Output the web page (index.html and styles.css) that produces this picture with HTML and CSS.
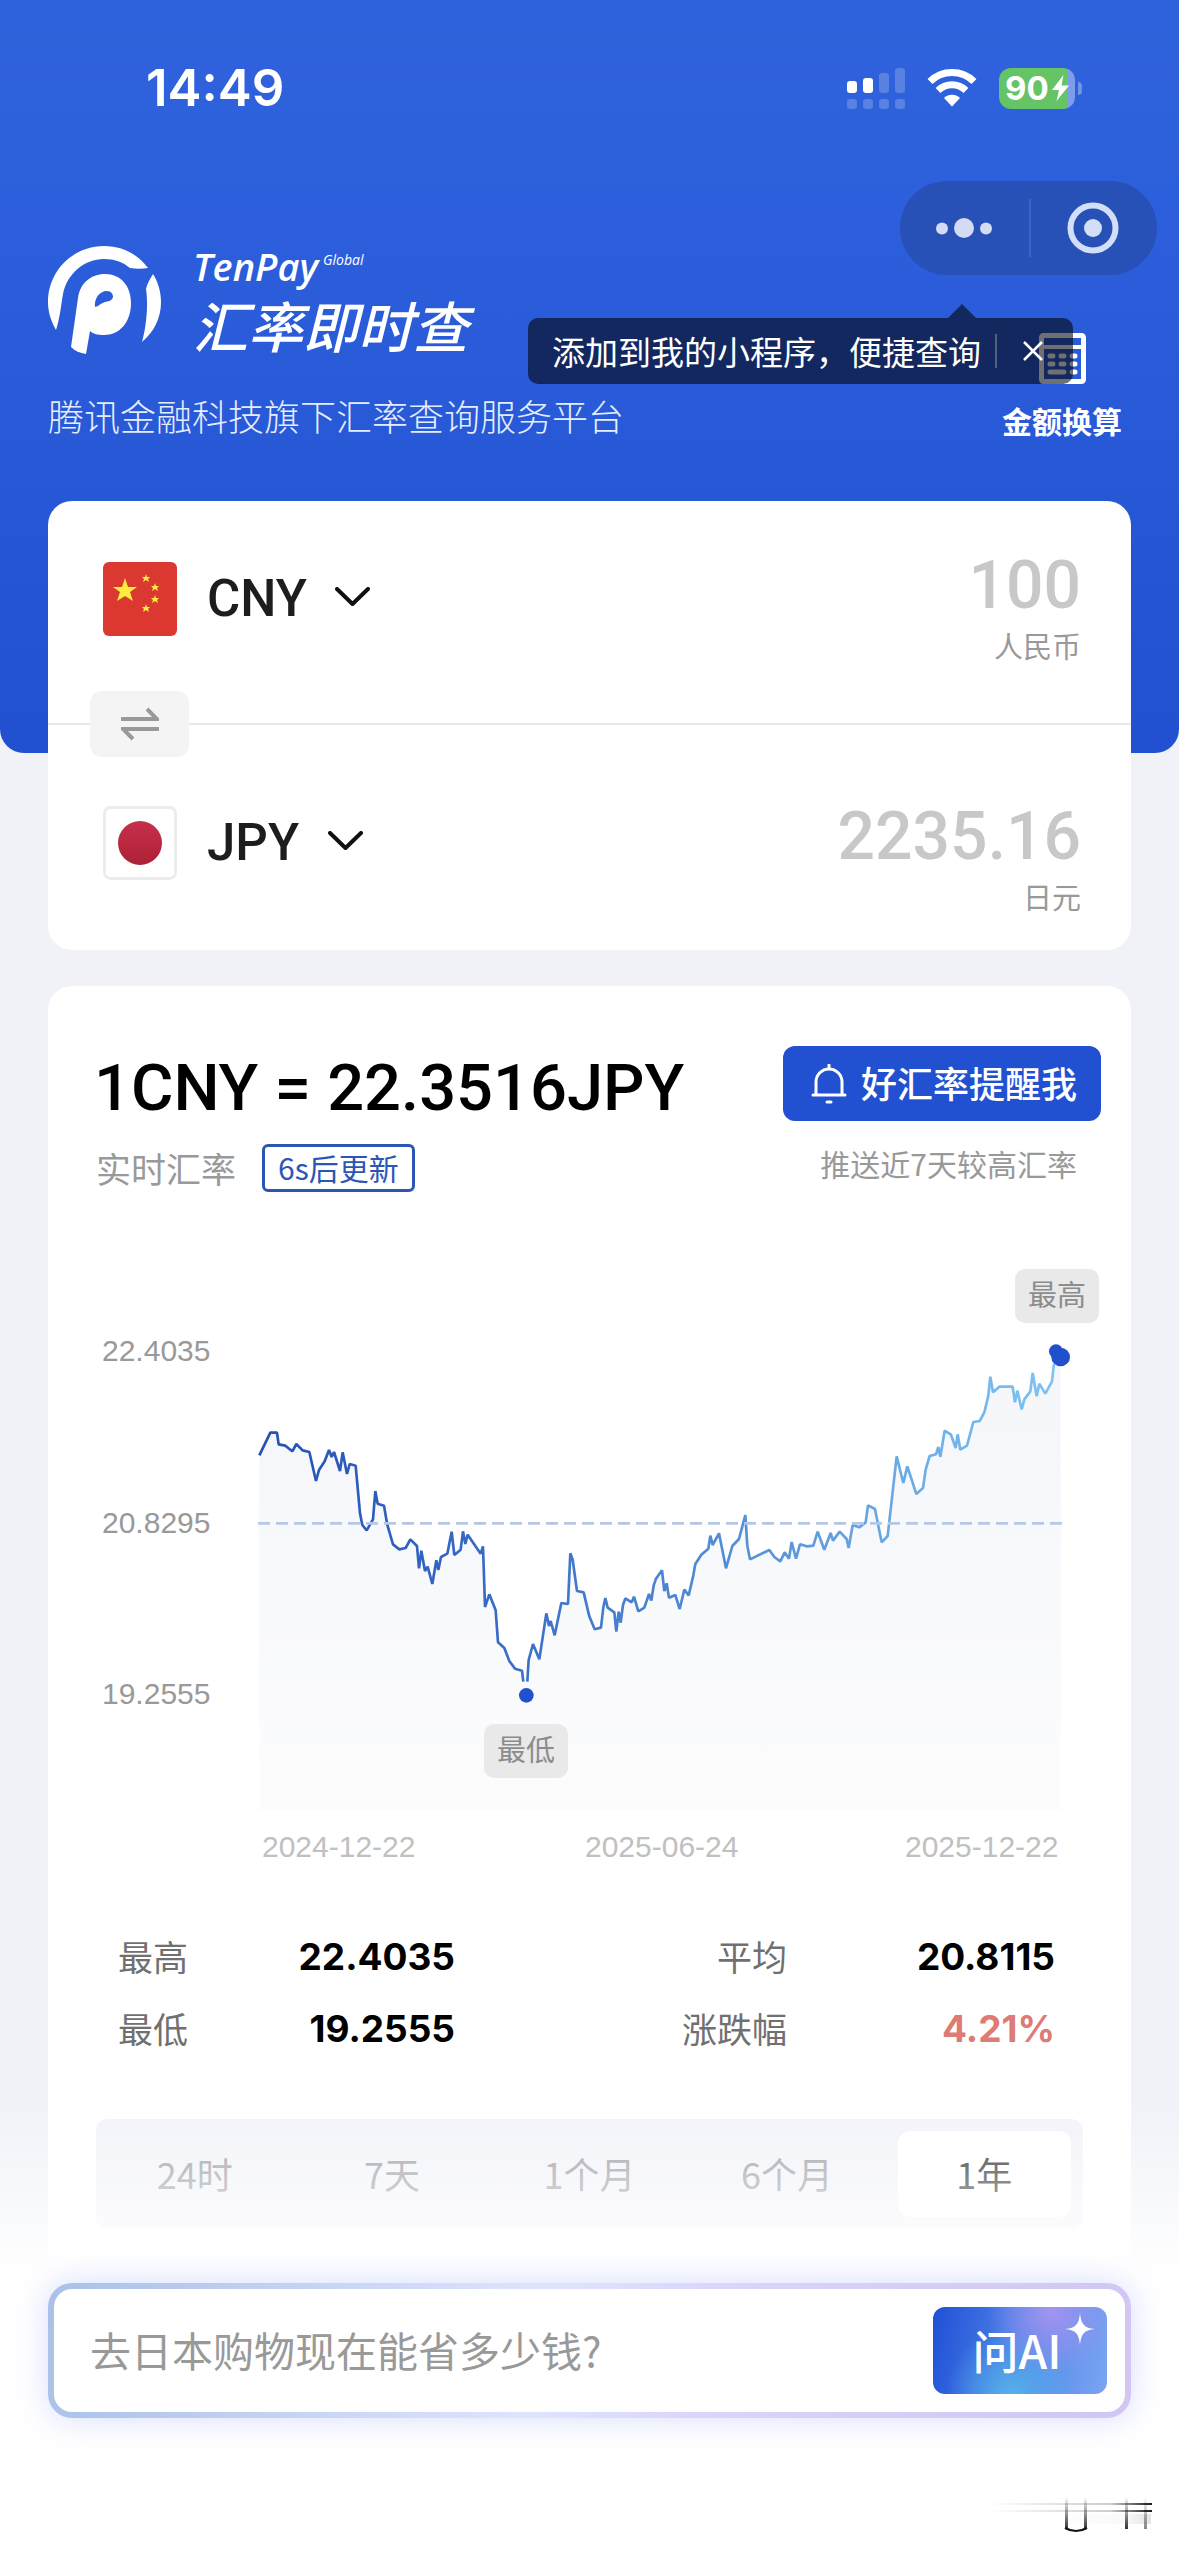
FILE: index.html
```html
<!DOCTYPE html>
<html lang="zh-CN">
<head>
<meta charset="utf-8">
<meta name="viewport" content="width=device-width, initial-scale=1">
<title>汇率即时查</title>
<link rel="stylesheet" href="styles.css">
</head>
<body>
<div class="page">
  <header class="hero">
    <div class="status">
      <time class="status-time">14:49</time>
      <div class="status-icons">
        <svg width="58" height="41" viewBox="0 0 58 41" fill="#fff" aria-hidden="true">
          <rect x="0" y="13" width="10" height="12" rx="3"/>
          <rect x="16" y="10" width="10" height="15" rx="3"/>
          <g opacity=".2">
            <rect x="32" y="5" width="10" height="20" rx="3"/>
            <rect x="48" y="0" width="10" height="25" rx="3"/>
            <rect x="0" y="31" width="10" height="10" rx="3"/>
            <rect x="16" y="31" width="10" height="10" rx="3"/>
            <rect x="32" y="31" width="10" height="10" rx="3"/>
            <rect x="48" y="31" width="10" height="10" rx="3"/>
          </g>
        </svg>
        <svg width="50" height="38" viewBox="0 0 50 38" aria-hidden="true">
          <path d="M3 12.500a31.500 31.500 0 0 1 44 0" fill="none" stroke="#fff" stroke-width="7"/>
          <path d="M11 21.500a20 20 0 0 1 28 0" fill="none" stroke="#fff" stroke-width="7"/>
          <path d="M25 37.500l-8-8.500a11.500 11.500 0 0 1 16 0z" fill="#fff"/>
        </svg>
        <div class="battery">
          <span>90</span>
          <svg width="17" height="26" viewBox="0 0 17 26" aria-hidden="true"><path d="M11.500 0L0 15h7L4.500 26 17 10.500H9.500z" fill="#fff"/></svg>
        </div>
      </div>
    </div>
    <div class="hero-main">
      <div class="brand">
        <div class="brand-row">
          <svg width="113" height="108" viewBox="0 0 113 108" fill="#fff" aria-hidden="true">
            <path d="M8 84C3 75 0 66 0 56 0 25 25 0 56 0c18 0 34 8 44 22-6 1-12 1-18 0C75 16 66 13 56 13 36 13 19 28 15 48 13 59 12 72 8 84z"/>
            <path d="M105 28c5 8 8 18 8 28 0 16-7 30-19 40 1-4 2-8 3-14 2-12 3-26 1-39 1-5 4-10 7-15z"/>
            <path fill-rule="evenodd" d="M23 101L30 52C32 37 43 28 57 28c16 0 26 12 26 29 0 19-11 32-27 32-6 0-11-1-14-4l-4 23c-6-1-11-3-15-7zM47 61c-1-8 4-16 12-16 4 0 6 3 6 6-1 6-9 3-15 9z"/>
          </svg>
          <div class="brand-text">
            <p class="brand-en">TenPay<sup>Global</sup></p>
            <h1 class="brand-cn">汇率即时查</h1>
          </div>
        </div>
        <p class="brand-sub">腾讯金融科技旗下汇率查询服务平台</p>
      </div>
      <a class="calc" href="#calc">
        <svg width="47" height="51" viewBox="0 0 47 51" fill="none" stroke="#fff" aria-hidden="true">
          <rect x="2.500" y="2.500" width="42" height="46" rx="2" stroke-width="5"/>
          <path d="M4 14h39" stroke-width="4"/>
          <path d="M11 23h3M22 23h3M33 23h3M11 31h3M22 31h3M33 31h3M11 39h14M33 39h3" stroke-width="5" stroke-linecap="round"/>
        </svg>
        <span>金额换算</span>
      </a>
    </div>
    <div class="capsule">
      <button type="button" aria-label="更多">
        <svg width="58" height="24" viewBox="0 0 58 24" fill="#d3dcf3" aria-hidden="true"><circle cx="7" cy="12.500" r="6"/><circle cx="29" cy="12" r="10"/><circle cx="51" cy="12.500" r="6"/></svg>
      </button>
      <button type="button" aria-label="关闭">
        <svg width="52" height="52" viewBox="0 0 52 52" aria-hidden="true"><circle cx="26" cy="26" r="22.500" fill="none" stroke="#d3dff8" stroke-width="6"/><circle cx="26" cy="26" r="9" fill="#d3dff8"/></svg>
      </button>
    </div>
    <div class="tip">
      <span>添加到我的小程序，便捷查询</span>
      <button type="button" aria-label="关闭提示">
        <svg width="20" height="20" viewBox="0 0 20 20" aria-hidden="true"><path d="M1 1l18 18M19 1L1 19" stroke="#fff" stroke-width="2.500"/></svg>
      </button>
    </div>
  </header>

  <main>
    <section class="card convert">
      <div class="cur cur-from">
        <div class="pick">
          <svg width="74" height="74" viewBox="0 0 74 74" aria-hidden="true">
            <rect width="74" height="74" rx="6" fill="#db3832"/>
            <g fill="#fbee3f">
              <path d="M22 16l3 9h9l-7 5 3 9-8-5-8 5 3-9-7-5h9z"/>
              <path d="M43 12l1 3h3l-2 2 1 3-3-2-3 2 1-3-2-2h3zM52 21l1 3h3l-2 2 1 3-3-2-3 2 1-3-2-2h3zM52 33l1 3h3l-2 2 1 3-3-2-3 2 1-3-2-2h3zM43 42l1 3h3l-2 2 1 3-3-2-3 2 1-3-2-2h3z"/>
            </g>
          </svg>
          <select aria-label="持有币种"><option>CNY</option></select>
          <svg class="chev" width="35" height="20" viewBox="0 0 35 20" aria-hidden="true"><path d="M2 2l15.500 15L33 2" fill="none" stroke="#111" stroke-width="4" stroke-linecap="round" stroke-linejoin="round"/></svg>
        </div>
        <div class="amount">
          <input id="from" type="text" inputmode="decimal" value="100">
          <label for="from">人民币</label>
        </div>
      </div>
      <div class="split">
        <button type="button" class="swap" aria-label="交换币种">
          <svg width="38" height="34" viewBox="0 0 38 34" fill="none" stroke="#999" stroke-width="4" aria-hidden="true"><path d="M0 12h36L26 2M38 22H2l10 10"/></svg>
        </button>
      </div>
      <div class="cur cur-to">
        <div class="pick">
          <svg width="74" height="74" viewBox="0 0 74 74" aria-hidden="true">
            <defs><linearGradient id="sun" x2="0" y2="1"><stop stop-color="#c5304a"/><stop offset="1" stop-color="#ae2135"/></linearGradient></defs>
            <rect x="1.500" y="1.500" width="71" height="71" rx="6" fill="#fff" stroke="#ececec" stroke-width="3"/>
            <circle cx="37" cy="37" r="22" fill="url(#sun)"/>
          </svg>
          <select aria-label="目标币种"><option>JPY</option></select>
          <svg class="chev" width="35" height="20" viewBox="0 0 35 20" aria-hidden="true"><path d="M2 2l15.500 15L33 2" fill="none" stroke="#111" stroke-width="4" stroke-linecap="round" stroke-linejoin="round"/></svg>
        </div>
        <div class="amount">
          <input id="to" type="text" inputmode="decimal" value="2235.16">
          <label for="to">日元</label>
        </div>
      </div>
    </section>

    <section class="card rate">
      <div class="rate-head">
        <div class="rate-now">
          <h2>1CNY = 22.3516JPY</h2>
          <p class="live">实时汇率 <span class="refresh">6s后更新</span></p>
        </div>
        <div class="alert">
          <button type="button" class="alert-btn">
            <svg width="36" height="40" viewBox="0 0 36 40" fill="none" stroke="#fff" stroke-width="3" stroke-linecap="round" aria-hidden="true"><path d="M18 1v4M5 30V18a13 13 0 0 1 26 0v12M2 31h32M16 38h4"/></svg>
            <span>好汇率提醒我</span>
          </button>
          <p>推送近7天较高汇率</p>
        </div>
      </div>

      <svg class="chart" viewBox="0 0 1003 610" role="img" aria-label="近一年汇率走势">
        <defs>
          <linearGradient id="line" gradientUnits="userSpaceOnUse" x1="178" x2="2582" y1="0" y2="0">
            <stop stop-color="#2351b4"/><stop offset=".3" stop-color="#3a6cc6"/><stop offset=".6" stop-color="#5590d6"/><stop offset="1" stop-color="#80c4f2"/>
          </linearGradient>
          <linearGradient id="area" x2="0" y2="1"><stop stop-color="#f4f6fa"/><stop offset="1" stop-color="#fcfcfd"/></linearGradient>
        </defs>
        <g transform="translate(102 40) scale(.33333)">
          <path fill="url(#area)" d="M178 1530V466L211 398 231 398 236 433 256 437 277 454 289 432 308 451 328 456 348 543 357 510 374 484 387 450 395 471 402 456 420 513 428 457 441 522 449 492 467 497 480 640 487 675 500 691 519 658 526 573 533 611 552 617 562 675 579 733 598 748 617 744 631 718 651 738 657 805 664 752 675 813 683 800 697 852 709 781 715 810 723 771 742 761 755 695 763 765 782 749 789 694 796 732 803 704 842 761 849 739 855 921 868 883 887 931 894 1027 913 1044 928 1083 945 1106 966 1112 970 1145 982 1145 986 1080 999 1032 1018 1078 1039 940 1047 978 1052 963 1064 1006 1084 909 1104 912 1111 760 1118 779 1131 873 1151 877 1168 949 1184 988 1203 983 1210 922 1216 894 1223 923 1243 937 1249 995 1256 935 1262 968 1269 915 1276 895 1295 907 1302 890 1315 934 1333 923 1347 882 1354 902 1361 857 1368 836 1386 811 1393 873 1400 850 1407 893 1426 885 1439 927 1453 869 1466 886 1480 826 1486 792 1504 764 1525 746 1531 707 1538 735 1557 700 1578 805 1597 738 1617 717 1636 645 1642 737 1650 778 1708 750 1723 771 1741 784 1754 757 1767 776 1775 726 1788 776 1800 733 1820 739 1840 737 1853 695 1873 749 1892 699 1899 722 1919 695 1940 717 1946 744 1958 675 1978 682 1997 667 2004 616 2025 627 2045 727 2063 708 2090 469 2110 549 2122 499 2135 539 2149 582 2169 564 2177 509 2189 468 2208 463 2215 441 2221 470 2234 392 2253 404 2267 444 2273 403 2281 449 2301 437 2320 366 2339 363 2353 337 2365 287 2371 230 2379 277 2398 260 2438 260 2445 307 2452 272 2465 328 2473 298 2491 274 2498 219 2510 289 2518 251 2536 281 2556 244 2562 191 2582 165V1530z"/>
          <g fill="none" stroke="url(#line)" stroke-width="8" stroke-linejoin="bevel">
            <polyline points="178,466 211,398 231,398 236,433 256,437 277,454 289,432 308,451 328,456 348,543 357,510 374,484 387,450 395,471 402,456 420,513 428,457 441,522 449,492 467,497 480,640 487,675 500,691 519,658 526,573 533,611 552,617 562,675 579,733 598,748 617,744 631,718 651,738 657,805 664,752 675,813 683,800 697,852 709,781 715,810 723,771 742,761 755,695 763,765 782,749 789,694 796,732 803,704 842,761 849,739 855,921 868,883 887,931 894,1027 913,1044 928,1083 945,1106 966,1112 970,1145"/>
            <polyline points="982,1145 986,1080 999,1032 1018,1078 1039,940 1047,978 1052,963 1064,1006 1084,909 1104,912 1111,760 1118,779 1131,873 1151,877 1168,949 1184,988 1203,983 1210,922 1216,894 1223,923 1243,937 1249,995 1256,935 1262,968 1269,915 1276,895 1295,907 1302,890 1315,934 1333,923 1347,882 1354,902 1361,857 1368,836 1386,811 1393,873 1400,850 1407,893 1426,885 1439,927 1453,869 1466,886 1480,826 1486,792 1504,764 1525,746 1531,707 1538,735 1557,700 1578,805 1597,738 1617,717 1636,645 1642,737 1650,778 1708,750 1723,771 1741,784 1754,757 1767,776 1775,726 1788,776 1800,733 1820,739 1840,737 1853,695 1873,749 1892,699 1899,722 1919,695 1940,717 1946,744 1958,675 1978,682 1997,667 2004,616 2025,627 2045,727 2063,708 2090,469 2110,549 2122,499 2135,539 2149,582 2169,564 2177,509 2189,468 2208,463 2215,441 2221,470 2234,392 2253,404 2267,444 2273,403 2281,449 2301,437 2320,366 2339,363 2353,337 2365,287 2371,230 2379,277 2398,260 2438,260 2445,307 2452,272 2465,328 2473,298 2491,274 2498,219 2510,289 2518,251 2536,281 2556,244 2562,191"/>
          </g>
          <path d="M174 670H2590" stroke="#b4c7e6" stroke-width="8" stroke-dasharray="36 18"/>
          <g fill="#2150cc"><circle cx="979" cy="1186" r="22"/><circle cx="2568" cy="154" r="21"/><circle cx="2582" cy="171" r="28"/></g>
        </g>
        <rect class="flag" x="917" y="9" width="84" height="54" rx="10"/>
        <text class="flag-text" x="959" y="46">最高</text>
        <rect class="flag" x="386" y="464" width="84" height="54" rx="10"/>
        <text class="flag-text" x="428" y="501">最低</text>
        <g class="tick-y"><text x="4" y="101">22.4035</text><text x="4" y="273">20.8295</text><text x="4" y="444">19.2555</text></g>
        <g class="tick-x"><text x="164" y="597">2024-12-22</text><text x="487" y="597">2025-06-24</text><text x="807" y="597">2025-12-22</text></g>
      </svg>

      <table class="stats">
        <tr><th scope="row">最高</th><td>22.4035</td><th scope="row">平均</th><td>20.8115</td></tr>
        <tr><th scope="row">最低</th><td>19.2555</td><th scope="row">涨跌幅</th><td class="up">4.21%</td></tr>
      </table>

      <div class="tabs" role="tablist">
        <button type="button" role="tab">24时</button>
        <button type="button" role="tab">7天</button>
        <button type="button" role="tab">1个月</button>
        <button type="button" role="tab">6个月</button>
        <button type="button" role="tab" aria-selected="true">1年</button>
      </div>
    </section>
  </main>

  <footer class="dock">
    <form class="ask">
      <input type="text" aria-label="提问" placeholder="去日本购物现在能省多少钱?">
      <button type="button">
        <span>问AI</span>
        <svg class="spark" width="30" height="32" viewBox="0 0 30 32" aria-hidden="true"><path d="M15 0c1 11 4 15 15 16-11 1-14 5-15 16-1-11-4-15-15-16 11-1 14-5 15-16z" fill="#fff"/></svg>
      </button>
    </form>
    <svg class="mark" width="164" height="38" viewBox="0 0 164 38" aria-hidden="true">
      <defs>
        <linearGradient id="fadeX"><stop stop-color="#000" stop-opacity="0"/><stop offset=".75" stop-color="#000" stop-opacity=".2"/><stop offset="1" stop-color="#000" stop-opacity=".9"/></linearGradient>
        <linearGradient id="fadeY" x2="0" y2="1"><stop stop-color="#000" stop-opacity="0"/><stop offset="1" stop-color="#000" stop-opacity=".8"/></linearGradient>
      </defs>
      <g fill="url(#fadeX)"><rect y="8" width="164" height="2"/><rect y="15" width="164" height="2"/><rect x="60" y="19" width="103" height="10" opacity=".12"/></g>
      <g fill="url(#fadeY)"><rect x="77" y="2" width="3" height="32"/><rect x="96" y="2" width="3" height="32"/><rect x="137" y="2" width="3" height="32"/><rect x="156" y="2" width="3" height="32" opacity=".6"/></g>
      <path d="M77 33q11 6 22 0" fill="none" stroke="#111" stroke-width="2"/>
    </svg>
  </footer>
</div>
</body>
</html>
```

FILE: styles.css
```css
* { box-sizing: border-box; }

body {
  margin: 0;
  background: #f0f2f8;
  color: #111;
  font-family: "Noto Sans CJK SC", "Noto Sans", sans-serif;
}

h1, h2, p { margin: 0; }

svg { display: block; flex: none; }

button, input, select {
  margin: 0;
  padding: 0;
  border: 0;
  background: none;
  color: inherit;
  font: inherit;
}

.page {
  position: relative;
  min-height: 100vh;
  overflow: hidden;
}

/* Hero */
.hero {
  position: relative;
  height: 753px;
  padding: 56px 0 0 48px;
  border-radius: 0 0 24px 24px;
  background: linear-gradient(#2f63dc, #2c5edb 33%, #2150d0);
  color: #fff;
}

.status {
  display: flex;
  align-items: center;
  justify-content: space-between;
  height: 64px;
  padding: 0 104px 0 98px;
}

.status-time {
  font: 600 51px/64px Inter, sans-serif;
}

.status-icons {
  display: flex;
  align-items: center;
  gap: 22px;
}

.battery {
  position: relative;
  display: flex;
  align-items: center;
  gap: 3px;
  width: 76px;
  height: 41px;
  padding-left: 6px;
  border-radius: 12px;
  background: linear-gradient(90deg, #65c466 68px, #7d9de8 68px);
  font: 700 33px/41px Inter, sans-serif;
}

.battery::after {
  content: "";
  position: absolute;
  right: -7px;
  top: 14px;
  width: 4px;
  height: 13px;
  border-radius: 0 4px 4px 0;
  background: #6f94e8;
}

.hero-main {
  display: flex;
  align-items: flex-end;
  justify-content: space-between;
  padding: 126px 57px 0 0;
}

.brand-row {
  display: flex;
  gap: 32px;
  height: 144px;
}

.brand-en {
  font: italic 600 38px/40px "Open Sans", sans-serif;
}

.brand-en sup {
  margin-left: 5px;
  font-size: 14px;
  font-weight: 400;
  line-height: 14px;
  vertical-align: 16px;
}

.brand-cn {
  font-size: 55px;
  font-weight: 500;
  font-style: italic;
  line-height: 76px;
}

.brand-sub {
  color: #e4edff;
  font-size: 36px;
  font-weight: 300;
  line-height: 50px;
}

.calc {
  display: flex;
  flex-direction: column;
  align-items: center;
  gap: 16px;
  color: #fff;
  font-size: 30px;
  font-weight: 700;
  line-height: 40px;
  text-decoration: none;
}

.capsule {
  position: absolute;
  top: 181px;
  right: 22px;
  display: flex;
  width: 257px;
  height: 94px;
  border-radius: 47px;
  background: #2751b7;
}

.capsule button {
  display: flex;
  flex: 1;
  align-items: center;
  justify-content: center;
}

.capsule button + button {
  background: linear-gradient(#3c64c2, #3c64c2) left center / 2px 58px no-repeat;
}

.tip {
  position: absolute;
  top: 318px;
  right: 106px;
  display: flex;
  align-items: center;
  height: 66px;
  padding: 0 30px 0 24px;
  border-radius: 10px;
  background: rgba(0, 0, 0, .56);
  font-size: 33px;
  line-height: 48px;
}

.tip::before {
  content: "";
  position: absolute;
  top: -14px;
  right: 97px;
  border: 14px solid transparent;
  border-top: 0;
  border-bottom-color: rgba(0, 0, 0, .56);
}

.tip button {
  margin-left: 14px;
  padding: 7px 0 7px 26px;
  border-left: 2px solid #53627f;
}

/* Cards */
.card {
  margin: 0 48px 36px;
  border-radius: 24px;
  background: #fff;
}

.convert {
  position: relative;
  margin-top: -252px;
}

.cur {
  display: flex;
  align-items: flex-start;
  justify-content: space-between;
  padding: 0 50px 0 55px;
}

.cur-from {
  height: 222px;
  padding-top: 49px;
}

.cur-from .pick { padding-top: 12px; }

.cur-to {
  height: 225px;
  padding-top: 76px;
}

.cur-to .pick { padding-top: 5px; }

.pick {
  display: flex;
  align-items: center;
}

.pick select {
  margin: 0 28px 0 30px;
  appearance: none;
  color: #1d1d1d;
  font: 500 51px/74px Roboto, sans-serif;
}

.chev { margin-bottom: 4px; }

.amount {
  display: flex;
  flex-direction: column;
  align-items: flex-end;
  gap: 5px;
}

.amount input {
  width: 360px;
  height: 72px;
  color: #c8c8c8;
  font: 500 66px/72px Roboto, sans-serif;
  text-align: right;
}

.amount label {
  color: #999;
  font-size: 29px;
  line-height: 36px;
}

.split {
  display: flex;
  align-items: center;
  height: 2px;
  padding-left: 42px;
  background: #e8e8e8;
}

.swap {
  display: flex;
  align-items: center;
  justify-content: center;
  width: 99px;
  height: 66px;
  border-radius: 12px;
  background: #f4f4f4;
}

/* Rate */
.rate { padding: 60px 30px 80px 50px; }

.rate-head {
  display: flex;
  align-items: flex-start;
  justify-content: space-between;
}

.rate h2 {
  margin-left: -4px;
  color: #000;
  font: 500 65px/84px Roboto, sans-serif;
}

.live {
  display: flex;
  align-items: center;
  gap: 26px;
  margin: 14px 0 0 -2px;
  color: #999;
  font-size: 35px;
  line-height: 48px;
}

.refresh {
  padding: 0 13px 2px;
  border: 3px solid #2c56b4;
  border-radius: 6px;
  color: #2c56b4;
  font-size: 30px;
  line-height: 40px;
}

.alert-btn {
  display: flex;
  align-items: center;
  gap: 14px;
  height: 75px;
  padding: 0 24px 0 28px;
  border-radius: 12px;
  background: #2150d0;
  color: #fff;
  font-size: 36px;
  font-weight: 500;
}

.alert-btn span { padding-bottom: 4px; }

.alert p {
  margin-top: 20px;
  padding-right: 24px;
  color: #999;
  font-size: 30px;
  line-height: 44px;
  text-align: right;
}

.chart {
  width: 100%;
  margin-top: 68px;
}

.flag { fill: #e9e9ea; }

.flag-text {
  fill: #8c8c8c;
  font-size: 29px;
  text-anchor: middle;
}

.tick-y, .tick-x {
  fill: #999;
  font: 30px "Liberation Sans", sans-serif;
}

.tick-x { fill: #c0c0c0; }

.stats {
  width: 937px;
  max-width: 100%;
  margin: 51px 0 0 20px;
  border-collapse: collapse;
  table-layout: fixed;
}

.stats th, .stats td {
  height: 72px;
  padding: 0;
  text-align: right;
}

.stats th {
  padding-bottom: 4px;
  color: #707070;
  font-size: 35px;
  font-weight: 400;
}

.stats th:first-child {
  width: 100px;
  text-align: left;
}

.stats td {
  color: #000;
  font: 700 37px/48px Inter, sans-serif;
}

.stats td:nth-child(2) { width: 237px; }

.stats th:nth-child(3) { width: 332px; }

.stats .up { color: #dd7b74; }

.tabs {
  display: flex;
  height: 110px;
  margin: 54px 18px 0 -2px;
  border-radius: 12px;
  background: #f2f3f9;
}

.tabs button {
  flex: 1;
  margin: 12px;
  padding-bottom: 2px;
  border-radius: 12px;
  color: #97999e;
  font-size: 36px;
}

.tabs [aria-selected="true"] {
  background: #fff;
  color: #222;
}

/* Ask bar floats above the page and fades it out */
.dock {
  position: absolute;
  right: 0;
  bottom: 0;
  left: 0;
  display: flex;
  flex-direction: column;
  gap: 77px;
  padding: 183px 48px 23px;
  background: linear-gradient(rgba(255, 255, 255, 0), #fff 176px);
}

.ask {
  display: flex;
  align-items: center;
  height: 135px;
  padding: 0 18px 0 36px;
  border: 6px solid transparent;
  border-radius: 24px;
  background:
    linear-gradient(#fff, #fff) padding-box,
    linear-gradient(100deg, #a9c1e8, #dfe4fd 45%, #d9d2f9 65%, #d1c6f4) border-box;
  box-shadow: 0 0 32px rgba(120, 140, 250, .3);
}

.ask input {
  flex: 1;
  min-width: 0;
  padding-bottom: 4px;
  font-size: 41px;
  outline: 0;
}

.ask input::placeholder {
  color: #999;
  opacity: 1;
}

.ask button {
  position: relative;
  width: 174px;
  height: 87px;
  padding: 0 6px 4px 0;
  border-radius: 12px;
  background:
    radial-gradient(circle at 68% 5%, #a493f0, rgba(164, 147, 240, 0) 44%),
    radial-gradient(circle at 45% 100%, #55b0ea, rgba(85, 176, 234, 0) 50%),
    linear-gradient(100deg, #2050d6, #4a80e6 45%, #7ba5f2);
  color: #fff;
  font-size: 46px;
  font-weight: 500;
}

.ask .spark {
  position: absolute;
  top: 6px;
  right: 12px;
}

.mark {
  align-self: flex-end;
  margin-right: -21px;
}
```
